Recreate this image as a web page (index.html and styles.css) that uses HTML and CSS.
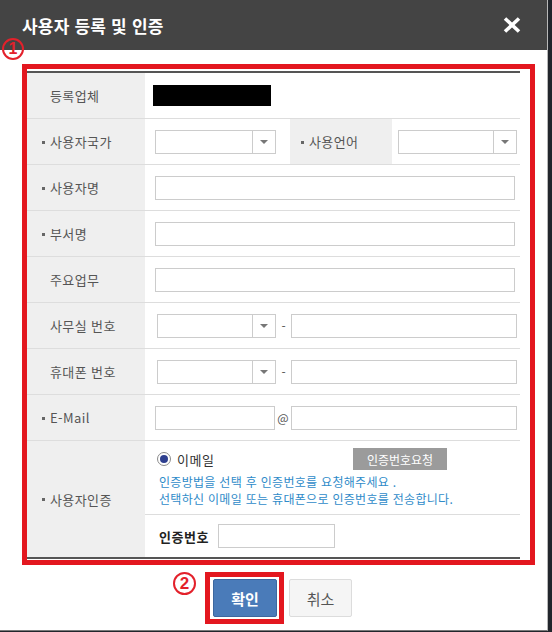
FILE: index.html
```html
<!DOCTYPE html>
<html lang="ko">
<head>
<meta charset="utf-8">
<title>사용자 등록 및 인증</title>
<link rel="stylesheet" href="styles.css">
</head>
<body>
<div class="screen">
  <div class="dialog">
    <div class="header">
      <h1 class="title">사용자 등록 및 인증</h1>
      <svg class="close" viewBox="0 0 18 16" aria-label="닫기"><path d="M2 1.5 L16 14.5 M16 1.5 L2 14.5" stroke="#fff" stroke-width="3.6" stroke-linecap="butt" fill="none"/></svg>
    </div>
    <div class="body">
      <div class="anno-box">
        <div class="form">
          <div class="row">
            <div class="label">등록업체</div>
            <div class="field"><span class="redacted"></span></div>
          </div>
          <div class="row row-split">
            <div class="label"><span class="req">사용자국가</span></div>
            <div class="field"><div class="select"><span class="select-val"></span><span class="select-arrow"><i class="tri"></i></span></div></div>
            <div class="label label-mid"><span class="req">사용언어</span></div>
            <div class="field field-tight"><div class="select select-b"><span class="select-val"></span><span class="select-arrow"><i class="tri"></i></span></div></div>
          </div>
          <div class="row">
            <div class="label"><span class="req">사용자명</span></div>
            <div class="field"><div class="input input-full"></div></div>
          </div>
          <div class="row">
            <div class="label"><span class="req">부서명</span></div>
            <div class="field"><div class="input input-full"></div></div>
          </div>
          <div class="row">
            <div class="label">주요업무</div>
            <div class="field"><div class="input input-full"></div></div>
          </div>
          <div class="row">
            <div class="label">사무실 번호</div>
            <div class="field field-phone"><div class="select select-p"><span class="select-val"></span><span class="select-arrow"><i class="tri"></i></span></div><span class="sep">-</span><div class="input input-rest"></div></div>
          </div>
          <div class="row">
            <div class="label">휴대폰 번호</div>
            <div class="field field-phone"><div class="select select-p"><span class="select-val"></span><span class="select-arrow"><i class="tri"></i></span></div><span class="sep">-</span><div class="input input-rest"></div></div>
          </div>
          <div class="row">
            <div class="label"><span class="req">E-Mail</span></div>
            <div class="field"><div class="input input-id"></div><span class="at">@</span><div class="input input-rest"></div></div>
          </div>
          <div class="row row-auth">
            <div class="label"><span class="req">사용자인증</span></div>
            <div class="auth">
              <div class="auth-top">
                <div class="auth-line">
                  <label class="method"><span class="radio"><i></i></span>이메일</label>
                  <span class="req-btn">인증번호요청</span>
                </div>
                <p class="hint">인증방법을 선택 후 인증번호를 요청해주세요 .<br>선택하신 이메일 또는 휴대폰으로 인증번호를 전송합니다.</p>
              </div>
              <div class="auth-code">
                <span class="code-label">인증번호</span>
                <div class="input input-code"></div>
              </div>
            </div>
          </div>
        </div>
      </div>
      <div class="actions">
        <div class="anno-btn"><button class="btn btn-primary">확인</button></div>
        <button class="btn btn-cancel">취소</button>
      </div>
    </div>
  </div>
  <span class="badge badge-1">1</span>
  <span class="badge badge-2">2</span>
</div>
</body>
</html>
```

FILE: styles.css
```css
* { box-sizing: border-box; }
html, body { margin: 0; padding: 0; }
body {
  background: #22262c;
  width: 552px;
  height: 632px;
  overflow: hidden;
  font-family: "Noto Sans CJK KR", "Noto Sans", sans-serif;
  color: #555;
}
.screen { position: relative; width: 552px; height: 632px; }
.dialog {
  width: 548px;
  height: 631px;
  background: #fff;
  border-right: 1px solid #b8b8b8;
  border-bottom: 1px solid #7a7a7a;
  display: flex;
  flex-direction: column;
}
.header {
  height: 50px;
  background: #444;
  display: flex;
  align-items: center;
  justify-content: space-between;
  padding: 0 26px 0 22px;
  flex: none;
}
.title {
  margin: 0;
  color: #fff;
  font-size: 17px;
  font-weight: 700;
  letter-spacing: 0.2px;
  line-height: 1;
}
.close { width: 18px; height: 16px; display: block; }
.body { padding: 14px 0 0 22px; }
.anno-box {
  width: 513px;
  height: 501px;
  border: 5px solid #e3171f;
  padding: 2px 10px 0 0;
}
.form { border-top: 2px solid #555; border-bottom: 2px solid #555; }
.row {
  display: grid;
  grid-template-columns: 118px 1fr;
  height: 46px;
  border-bottom: 1px solid #ddd;
}
.row-split { grid-template-columns: 118px 145px 102px 1fr; }
.label {
  background: #efefef;
  display: flex;
  align-items: center;
  padding-left: 23px;
  font-size: 13px;
  letter-spacing: 0.4px;
  color: #555;
}
.label-mid { padding-left: 19px; }
.req::before {
  content: "";
  display: inline-block;
  width: 3px;
  height: 3px;
  background: #666;
  margin-left: -8px;
  margin-right: 5px;
  vertical-align: middle;
  position: relative;
  top: -1px;
}
.field {
  display: flex;
  align-items: center;
  padding-left: 10px;
}
.field-tight { padding-left: 6px; }
.field-phone { padding-left: 12px; }
.redacted { display: block; width: 118px; height: 21px; background: #000; margin-left: -2px; }
.select {
  display: flex;
  width: 121px;
  height: 24px;
  border: 1px solid #ccc;
  background: #fff;
}
.select-b { width: 119px; }
.select-p { width: 119px; }
.select-val { flex: 1; }
.select-arrow {
  width: 23px;
  border-left: 1px solid #ccc;
  display: flex;
  align-items: center;
  justify-content: center;
}
.tri {
  width: 0; height: 0;
  border-left: 4px solid transparent;
  border-right: 4px solid transparent;
  border-top: 4px solid #777;
}
.input { height: 24px; border: 1px solid #ccc; background: #fff; }
.input-full { width: 360px; }
.input-rest { width: 226px; }
.input-id { width: 120px; }
.input-code { width: 117px; margin-left: 9px; }
.sep { width: 15px; text-align: center; font-size: 12px; color: #555; }
.at { width: 16px; text-align: center; font-size: 12px; color: #555; }
.row-auth { height: auto; border-bottom: 0; }
.auth { display: flex; flex-direction: column; }
.auth-top { height: 74px; border-bottom: 1px solid #ddd; padding: 7px 0 0 12px; }
.auth-line { display: flex; align-items: center; height: 22px; }
.method {
  width: 196px;
  display: flex;
  align-items: center;
  font-size: 13px;
  color: #333;
  letter-spacing: 0.5px;
}
.radio {
  width: 14px; height: 14px;
  border: 1px solid #8a8a8a;
  border-radius: 50%;
  display: flex; align-items: center; justify-content: center;
  margin-right: 6px;
  background: #fff;
}
.radio i { width: 8px; height: 8px; border-radius: 50%; background: #2e3f8f; }
.req-btn {
  width: 94px;
  height: 22px;
  background: #9b9b9b;
  color: #fff;
  font-size: 12px;
  display: flex; align-items: center; justify-content: center;
}
.hint {
  margin: 3px 0 0 2px;
  font-size: 12px;
  line-height: 17px;
  color: #2f8bc9;
  letter-spacing: 0.3px;
}
.auth-code { height: 42px; display: flex; align-items: center; padding-left: 14px; }
.code-label { font-size: 13px; font-weight: 700; color: #222; letter-spacing: 0.5px; }
.actions {
  display: flex;
  align-items: center;
  margin: 7px 0 0 183px;
}
.anno-btn { border: 5px solid #e3171f; padding: 2px 2px 2px 3px; margin-right: 5px; }
.btn {
  font-family: "Noto Sans CJK KR", "Noto Sans", sans-serif;
  height: 38px;
  font-size: 15px;
  border-radius: 2px;
  padding: 0;
  display: block;
}
.btn-primary {
  width: 64px;
  background: #4a7bb9;
  border: 1px solid #3c679f;
  color: #fff;
  font-weight: 700;
}
.btn-cancel {
  width: 63px;
  background: #f5f5f5;
  border: 1px solid #dcdcdc;
  color: #555;
}
.badge {
  position: absolute;
  border: 2px solid #e3212b;
  border-radius: 50%;
  color: #e3212b;
  font-weight: 700;
  font-family: "Liberation Sans", sans-serif;
  display: flex; align-items: center; justify-content: center;
}
.badge-1 { left: 2px; top: 38px; width: 22px; height: 22px; font-size: 16px; }
.badge-2 { left: 173px; top: 572px; width: 23px; height: 23px; font-size: 17px; }
```
